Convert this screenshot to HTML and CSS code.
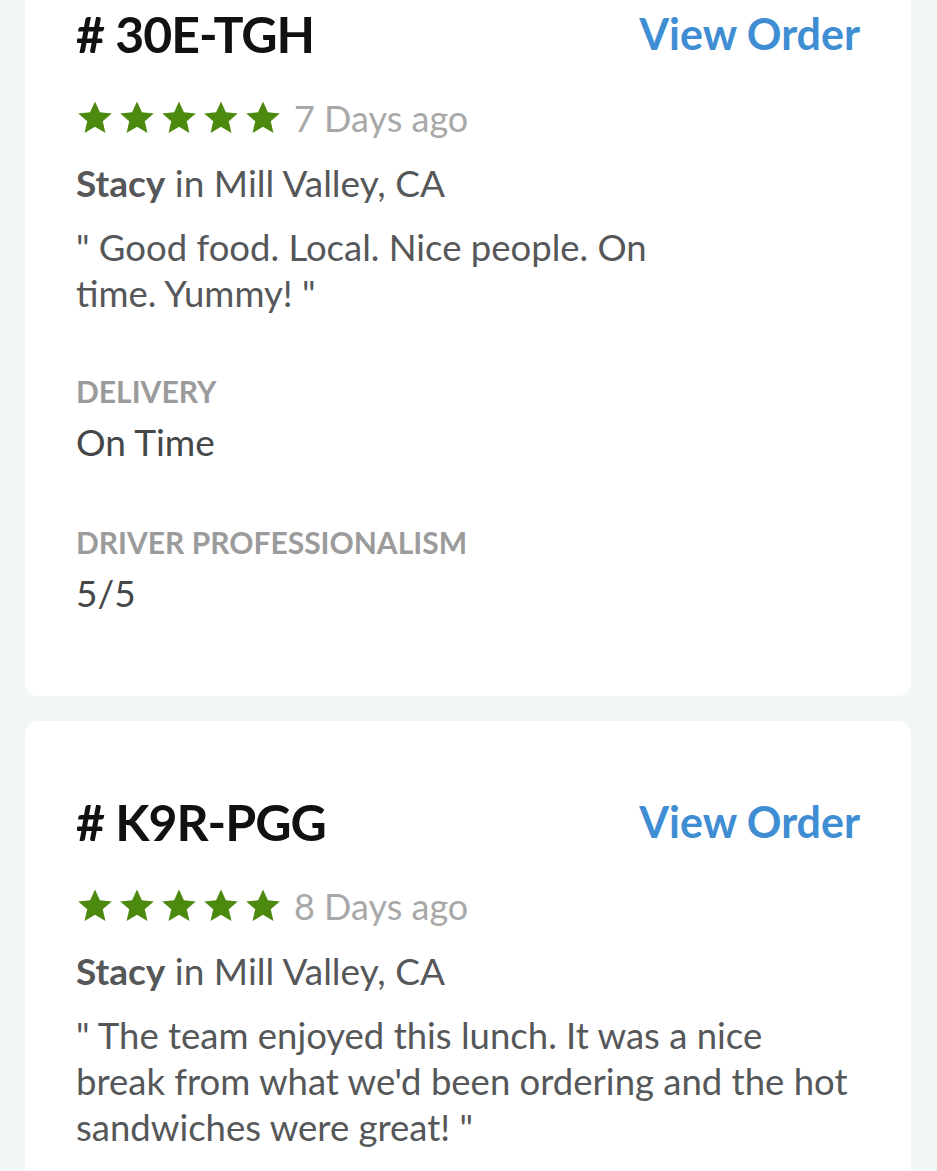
FILE: index.html
```html
<!DOCTYPE html>
<html>
<head>
<meta charset="utf-8">
<link rel="stylesheet" href="styles.css">
</head>
<body>
<div class="list">
  <div class="card">
    <div class="head">
      <div class="order-id"># 30E-TGH</div>
      <a class="view" href="#">View Order</a>
    </div>
    <div class="rating">
      <div class="stars">
        <svg viewBox="0 0 24 24"><polygon points="12,1.5 15.1,8.4 22.6,9.1 16.9,14.1 18.6,21.5 12,17.6 5.4,21.5 7.1,14.1 1.4,9.1 8.9,8.4"/></svg>
        <svg viewBox="0 0 24 24"><polygon points="12,1.5 15.1,8.4 22.6,9.1 16.9,14.1 18.6,21.5 12,17.6 5.4,21.5 7.1,14.1 1.4,9.1 8.9,8.4"/></svg>
        <svg viewBox="0 0 24 24"><polygon points="12,1.5 15.1,8.4 22.6,9.1 16.9,14.1 18.6,21.5 12,17.6 5.4,21.5 7.1,14.1 1.4,9.1 8.9,8.4"/></svg>
        <svg viewBox="0 0 24 24"><polygon points="12,1.5 15.1,8.4 22.6,9.1 16.9,14.1 18.6,21.5 12,17.6 5.4,21.5 7.1,14.1 1.4,9.1 8.9,8.4"/></svg>
        <svg viewBox="0 0 24 24"><polygon points="12,1.5 15.1,8.4 22.6,9.1 16.9,14.1 18.6,21.5 12,17.6 5.4,21.5 7.1,14.1 1.4,9.1 8.9,8.4"/></svg>
      </div>
      <span class="ago">7 Days ago</span>
    </div>
    <div class="who"><b>Stacy</b> in Mill Valley, CA</div>
    <p class="quote">" Good food. Local. Nice people. On<br>time. Yummy! "</p>
    <div class="field first">
      <div class="label">DELIVERY</div>
      <div class="value">On Time</div>
    </div>
    <div class="field">
      <div class="label">DRIVER PROFESSIONALISM</div>
      <div class="value">5/5</div>
    </div>
  </div>

  <div class="card">
    <div class="head">
      <div class="order-id"># K9R-PGG</div>
      <a class="view" href="#">View Order</a>
    </div>
    <div class="rating">
      <div class="stars">
        <svg viewBox="0 0 24 24"><polygon points="12,1.5 15.1,8.4 22.6,9.1 16.9,14.1 18.6,21.5 12,17.6 5.4,21.5 7.1,14.1 1.4,9.1 8.9,8.4"/></svg>
        <svg viewBox="0 0 24 24"><polygon points="12,1.5 15.1,8.4 22.6,9.1 16.9,14.1 18.6,21.5 12,17.6 5.4,21.5 7.1,14.1 1.4,9.1 8.9,8.4"/></svg>
        <svg viewBox="0 0 24 24"><polygon points="12,1.5 15.1,8.4 22.6,9.1 16.9,14.1 18.6,21.5 12,17.6 5.4,21.5 7.1,14.1 1.4,9.1 8.9,8.4"/></svg>
        <svg viewBox="0 0 24 24"><polygon points="12,1.5 15.1,8.4 22.6,9.1 16.9,14.1 18.6,21.5 12,17.6 5.4,21.5 7.1,14.1 1.4,9.1 8.9,8.4"/></svg>
        <svg viewBox="0 0 24 24"><polygon points="12,1.5 15.1,8.4 22.6,9.1 16.9,14.1 18.6,21.5 12,17.6 5.4,21.5 7.1,14.1 1.4,9.1 8.9,8.4"/></svg>
      </div>
      <span class="ago">8 Days ago</span>
    </div>
    <div class="who"><b>Stacy</b> in Mill Valley, CA</div>
    <p class="quote">" The team enjoyed this lunch. It was a nice break from what we'd been ordering and the hot sandwiches were great! "</p>
    <div class="field first">
      <div class="label">DELIVERY</div>
      <div class="value">On Time</div>
    </div>
    <div class="field">
      <div class="label">DRIVER PROFESSIONALISM</div>
      <div class="value">5/5</div>
    </div>
  </div>
</div>
</body>
</html>
```

FILE: styles.css
```css
html, body {
  margin: 0;
  padding: 0;
  background: #f3f6f7;
  font-family: Lato, "Open Sans", sans-serif;
  overflow: hidden;
}

.list {
  display: flex;
  flex-direction: column;
  gap: 25px;
  padding: 0 26px 0 25px;
  margin-top: -67px;
}

.card {
  background: #ffffff;
  border-radius: 14px;
  padding: 71px 51px 81px 51px;
}

.head {
  display: flex;
  justify-content: space-between;
  align-items: center;
  height: 60px;
}

.order-id {
  font-size: 50px;
  font-weight: 700;
  line-height: 60px;
  color: #111111;
  letter-spacing: -1px;
}

.view {
  font-size: 43px;
  font-weight: 700;
  line-height: 60px;
  color: #3f8dd2;
  text-decoration: none;
}

.rating {
  display: flex;
  align-items: center;
  margin-top: 32px;
  height: 44px;
}

.stars {
  display: flex;
  gap: 4px;
}

.stars svg {
  width: 38px;
  height: 38px;
  fill: #4b8a0f;
}

.ago {
  margin-left: 12px;
  font-size: 36px;
  line-height: 44px;
  color: #a8a8a8;
  font-weight: 400;
}

.who {
  margin-top: 21px;
  font-size: 37px;
  line-height: 44px;
  color: #555759;
}

.who b {
  font-weight: 700;
}

.quote {
  margin: 19px 0 0 0;
  font-size: 36.5px;
  line-height: 46px;
  color: #555759;
}

.field {
  margin-top: 60px;
}

.field.first {
  margin-top: 57px;
}

.label {
  font-size: 30px;
  line-height: 36px;
  font-weight: 700;
  color: #9b9b9b;
}

.value {
  margin-top: 11px;
  font-size: 37px;
  line-height: 44px;
  color: #444648;
}
```
